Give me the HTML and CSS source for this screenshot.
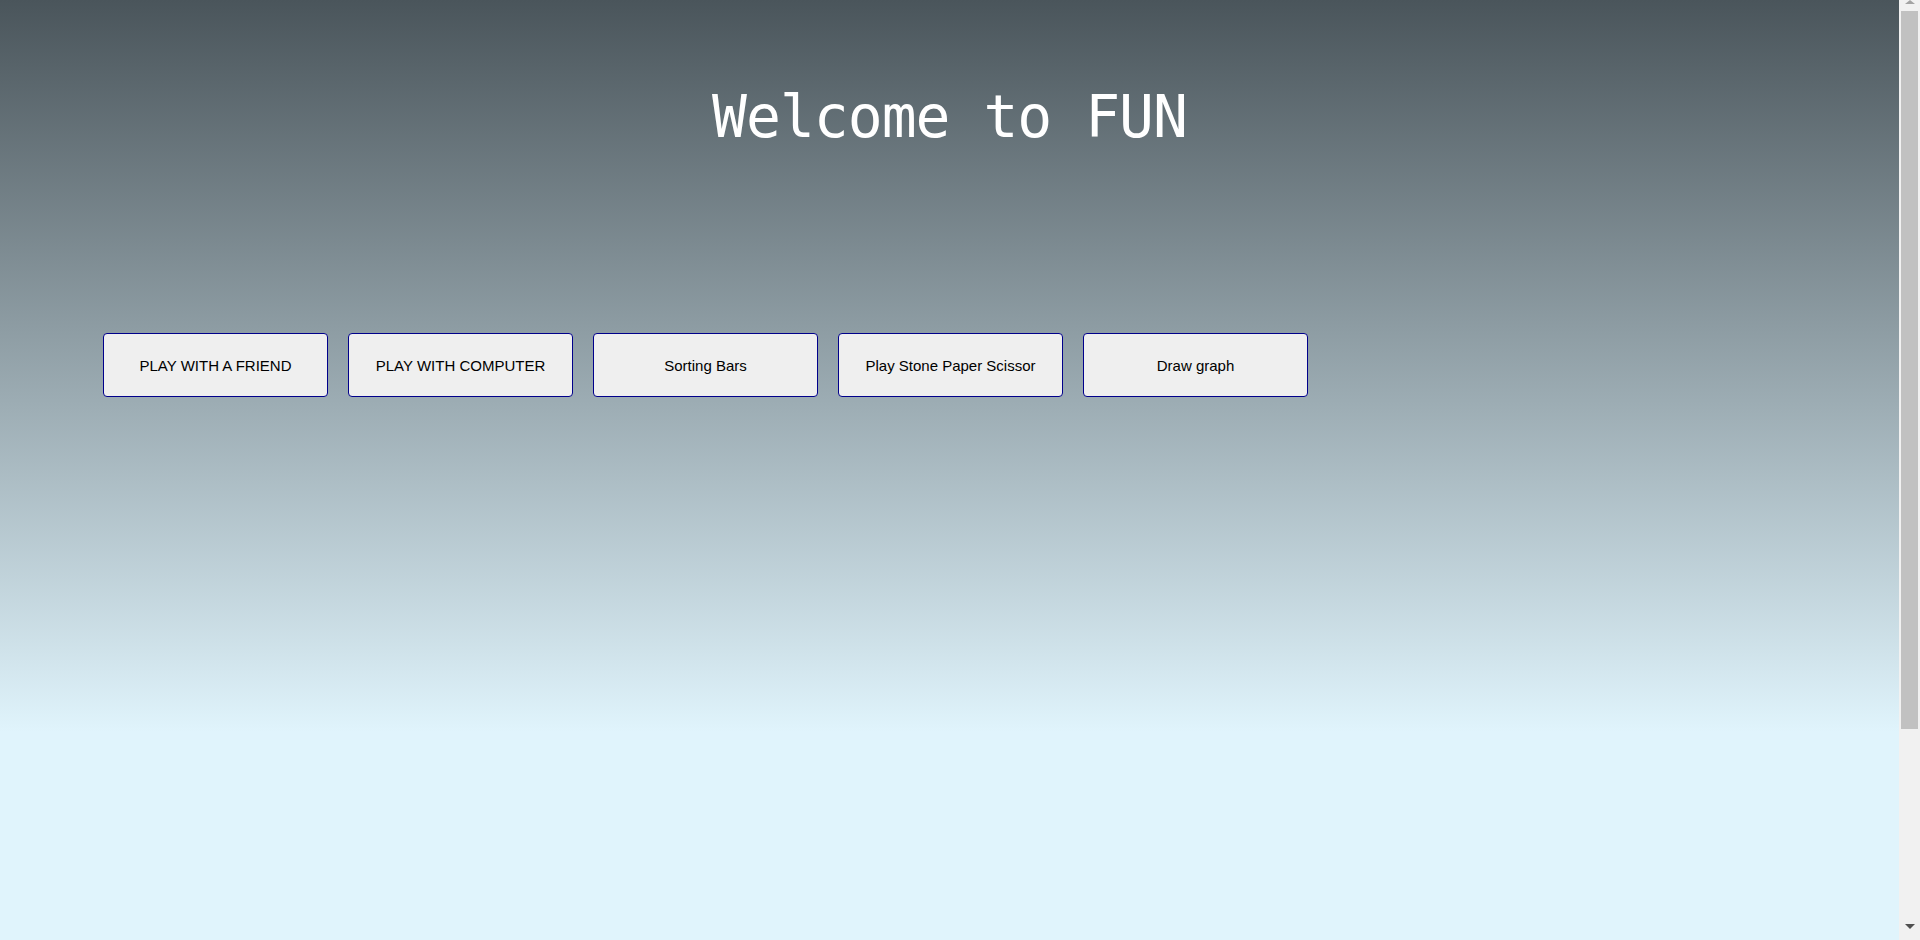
FILE: index.html
```html
<!DOCTYPE html>
<html lang="en">
<head>
<meta charset="utf-8">
<title>Welcome to FUN</title>
<link rel="stylesheet" href="styles.css">
</head>
<body>
<div class="window">
  <main class="page">
    <h1 class="title">Welcome to FUN</h1>
    <div class="menu">
      <button class="menu-btn">PLAY WITH A FRIEND</button>
      <button class="menu-btn">PLAY WITH COMPUTER</button>
      <button class="menu-btn">Sorting Bars</button>
      <button class="menu-btn">Play Stone Paper Scissor</button>
      <button class="menu-btn">Draw graph</button>
    </div>
  </main>
  <div class="scrollbar" aria-hidden="true">
    <div class="sb-arrow sb-up"><span class="tri tri-up"></span></div>
    <div class="sb-thumb"></div>
    <div class="sb-track"></div>
    <div class="sb-arrow sb-down"><span class="tri tri-down"></span></div>
  </div>
</div>
</body>
</html>
```
FILE: styles.css
```css
html, body {
  margin: 0;
  height: 100%;
  overflow: hidden;
}
.window {
  display: flex;
  height: 940px;
}
.page {
  flex: 1;
  display: flex;
  flex-direction: column;
  background: linear-gradient(to bottom, #4a555b 0px, #e0f4fc 732px, #e0f4fc 100%);
}
.title {
  margin: 82px 0 0 0;
  font-family: "DejaVu Sans Mono", monospace;
  font-weight: normal;
  font-size: 58px;
  letter-spacing: -1px;
  line-height: 70px;
  color: #ffffff;
  text-align: center;
}
.menu {
  display: flex;
  gap: 20px;
  margin-top: 181px;
  padding-left: 103px;
}
.menu-btn {
  width: 225px;
  height: 64px;
  box-sizing: border-box;
  background: #efefef;
  border: 1px solid #00008b;
  border-radius: 4px;
  font-family: "Liberation Sans", Arial, sans-serif;
  font-size: 15px;
  color: #000;
  display: flex;
  align-items: center;
  justify-content: center;
  padding: 0;
}
.scrollbar {
  width: 21px;
  background: #f1f1f1;
  display: flex;
  flex-direction: column;
  align-items: center;
}
.sb-arrow {
  display: flex;
  justify-content: center;
  width: 21px;
}
.sb-up {
  height: 11px;
  align-items: flex-start;
}
.sb-down {
  height: 21px;
  align-items: flex-start;
  padding-top: 5px;
  box-sizing: border-box;
}
.tri {
  width: 0;
  height: 0;
  border-left: 5px solid transparent;
  border-right: 5px solid transparent;
}
.tri-up {
  border-bottom: 4px solid #a3a3a3;
}
.tri-down {
  border-top: 5px solid #505050;
}
.sb-thumb {
  width: 17px;
  height: 718px;
  background: #c1c1c1;
}
.sb-track {
  flex: 1;
}
```
